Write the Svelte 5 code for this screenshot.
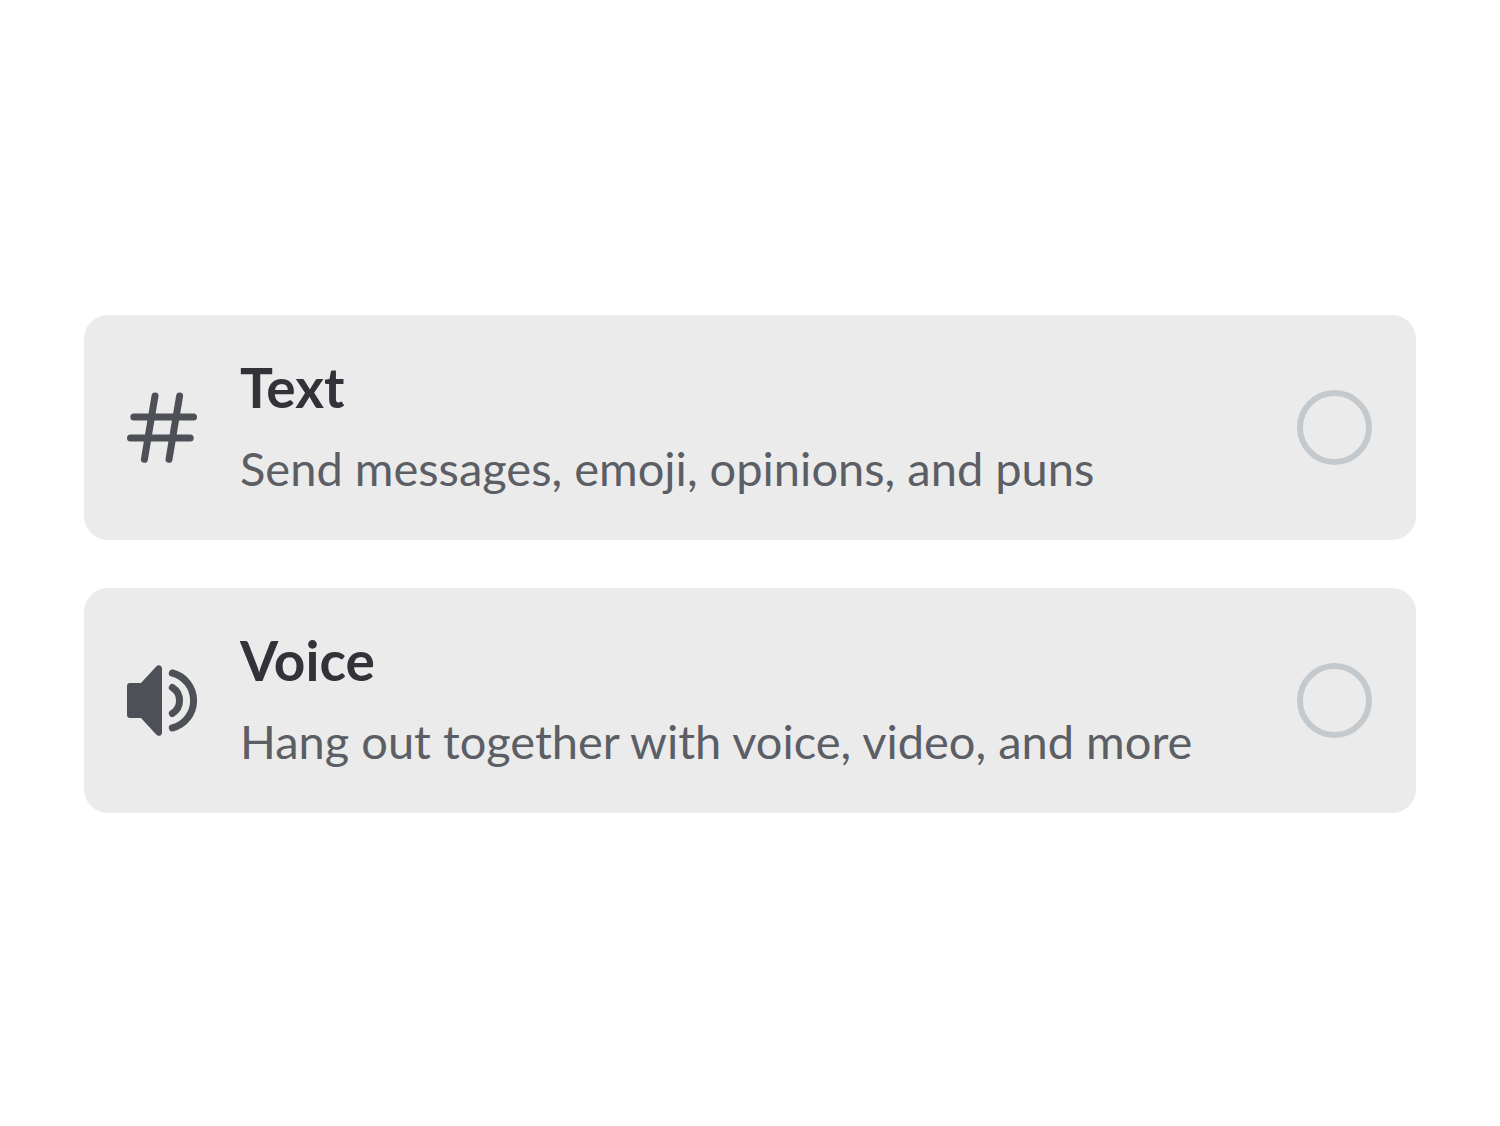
<script>
  const options = [
    { id: 'text', title: 'Text', description: 'Send messages, emoji, opinions, and puns' },
    { id: 'voice', title: 'Voice', description: 'Hang out together with voice, video, and more' }
  ];
  let selected = $state('');
</script>

<main>
  {#each options as option (option.id)}
    <label class="card" for={option.id}>
      <svg class="icon" viewBox="0 0 72 73" aria-hidden="true">
        {#if option.id === 'text'}
          <path class="line" d="M29 5L18.4 68.3M53.6 5L43 68.3M7.8 26H67.5M4.5 47H64.2" />
        {:else}
          <path
            class="solid"
            d="M4 19H15L30.2 2.4C32.4 0 36 1.2 36 4.6V68.4C36 71.8 32.4 73 30.2 70.6L15 54H4Q1 54 1 51V22Q1 19 4 19Z"
          />
          <path class="line" d="M46.3 9A28.4 28.4 0 0 1 46.3 64M46.3 23.5A15.3 15.3 0 0 1 46.3 49.5" />
        {/if}
      </svg>
      <span class="copy">
        <span class="title">{option.title}</span>
        <span class="description">{option.description}</span>
      </span>
      <input id={option.id} type="radio" name="channel-type" value={option.id} bind:group={selected} />
    </label>
  {/each}
</main>

<style>
  :global(body) {
    margin: 0;
    background: #fff;
  }

  main {
    box-sizing: border-box;
    min-height: 100vh;
    padding: 50px 84px 48px;
    display: flex;
    flex-direction: column;
    justify-content: center;
    gap: 48px;
    font-family: Lato, sans-serif;
  }

  .card {
    display: flex;
    align-items: center;
    gap: 42px;
    padding: 36px 44px 36px 42px;
    border-radius: 24px;
    background: #ebebeb;
    cursor: pointer;
  }

  .icon {
    flex: none;
    width: 72px;
    height: 73px;
  }

  .line {
    fill: none;
    stroke: #4e5058;
    stroke-width: 7;
    stroke-linecap: round;
  }

  .solid {
    fill: #4e5058;
  }

  .copy {
    flex: 1;
    min-width: 0;
    display: flex;
    flex-direction: column;
    gap: 9px;
  }

  .title {
    font-size: 55px;
    line-height: 72px;
    font-weight: 700;
    color: #313338;
  }

  .description {
    font-size: 47px;
    line-height: 72px;
    color: #5c5e66;
  }

  input {
    appearance: none;
    flex: none;
    box-sizing: border-box;
    width: 75px;
    height: 75px;
    margin: 0;
    border: 6px solid #c4c9ce;
    border-radius: 50%;
    cursor: pointer;
  }

  input:checked {
    border: 20px solid #5865f2;
  }
</style>
